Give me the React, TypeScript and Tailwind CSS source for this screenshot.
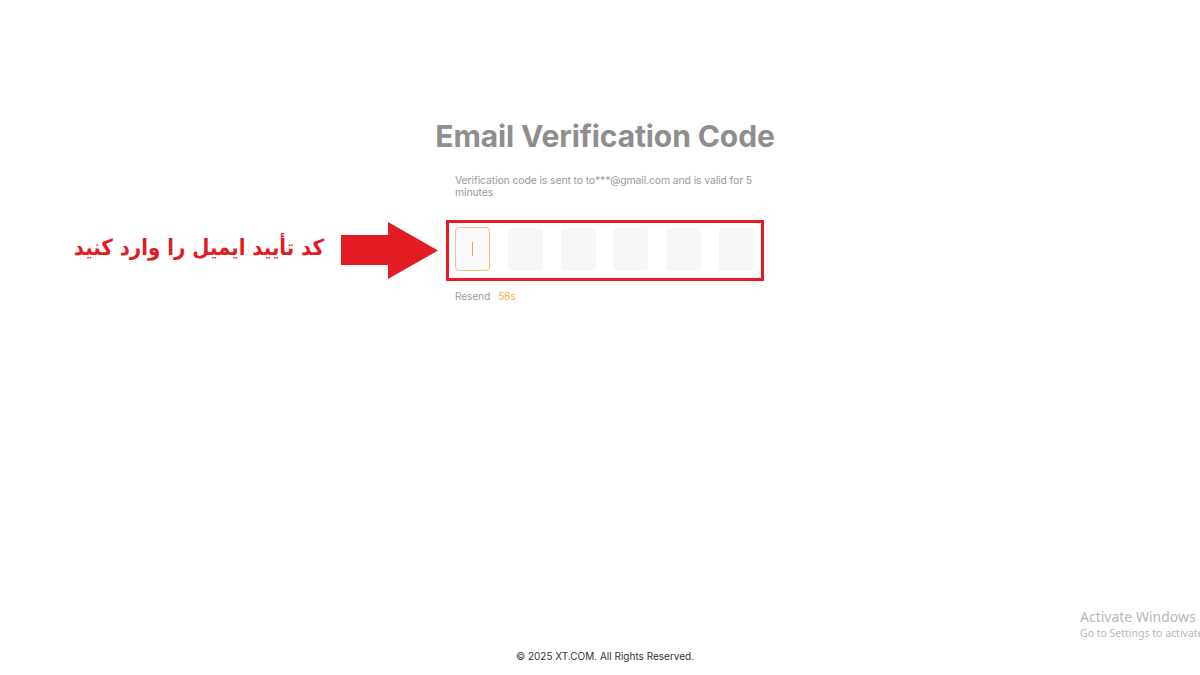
import React from "react";

const cells = [0, 1, 2, 3, 4, 5];

function Arrow() {
  return (
    <svg width="97" height="57" viewBox="0 0 97 57" className="block">
      <polygon points="0,13 47,13 47,0 97,28.5 47,57 47,43 0,43" fill="#e31b23" />
    </svg>
  );
}

export default function App() {
  return (
    <div className="relative h-[675px] w-[1200px] overflow-hidden bg-white font-['Inter',sans-serif]">
      <div className="flex flex-col items-center pl-[10px] pt-[117px]">
        <h1 className="text-[30px] font-bold leading-[38px] tracking-[-0.1px] text-[#8e8e8e]">
          Email Verification Code
        </h1>
        <div className="mt-[20px] w-[300px]">
          <p className="text-[10.5px] leading-[12px] tracking-[-0.15px] text-[#9a9a9a]">
            Verification code is sent to to***@gmail.com and is valid for 5 minutes
          </p>

          <div className="relative -ml-[9px] mt-[21px] w-[318px] border-[3px] border-[#e21b23] pb-[7px] pl-[6px] pr-[7px] pt-[4px]">
            <div className="flex justify-between">
              {cells.map((i) =>
                i === 0 ? (
                  <div
                    key={i}
                    className="flex h-[44px] w-[35px] items-center justify-center rounded-[4px] border border-[#f2c27a] bg-[#fafafa]"
                  >
                    <span className="h-[14px] w-px bg-[#e9a94a]" />
                  </div>
                ) : (
                  <div key={i} className="h-[44px] w-[35px] rounded-[4px] bg-[#f7f7f7]" />
                )
              )}
            </div>

            <div className="absolute right-full -top-[1px] mr-[11px] flex items-center">
              <span
                dir="rtl"
                className="mr-[17px] -mt-[6px] whitespace-nowrap font-['DejaVu_Sans_Condensed','DejaVu_Sans',sans-serif] text-[22px] font-bold leading-none text-[#e21b23]"
              >
                کد تأیید ایمیل را وارد کنید
              </span>
              <Arrow />
            </div>
          </div>

          <div className="mt-[8px] flex gap-[8px] text-[10px] leading-[14px]">
            <span className="text-[#9a9a9a]">Resend</span>
            <span className="text-[#f5b04a]">58s</span>
          </div>
        </div>
      </div>

      <div className="absolute bottom-[12px] left-0 right-0 pl-[10px] text-center text-[10px] leading-[14px] text-[#333333]">
        © 2025 XT.COM. All Rights Reserved.
      </div>

      <div className="absolute left-[1080px] top-[608px] whitespace-nowrap font-['Noto_Sans',sans-serif] text-[#b8b8b8]">
        <div className="text-[14px] leading-[18px]">Activate Windows</div>
        <div className="text-[10.5px] leading-[14px]">Go to Settings to activate Windows.</div>
      </div>
    </div>
  );
}
